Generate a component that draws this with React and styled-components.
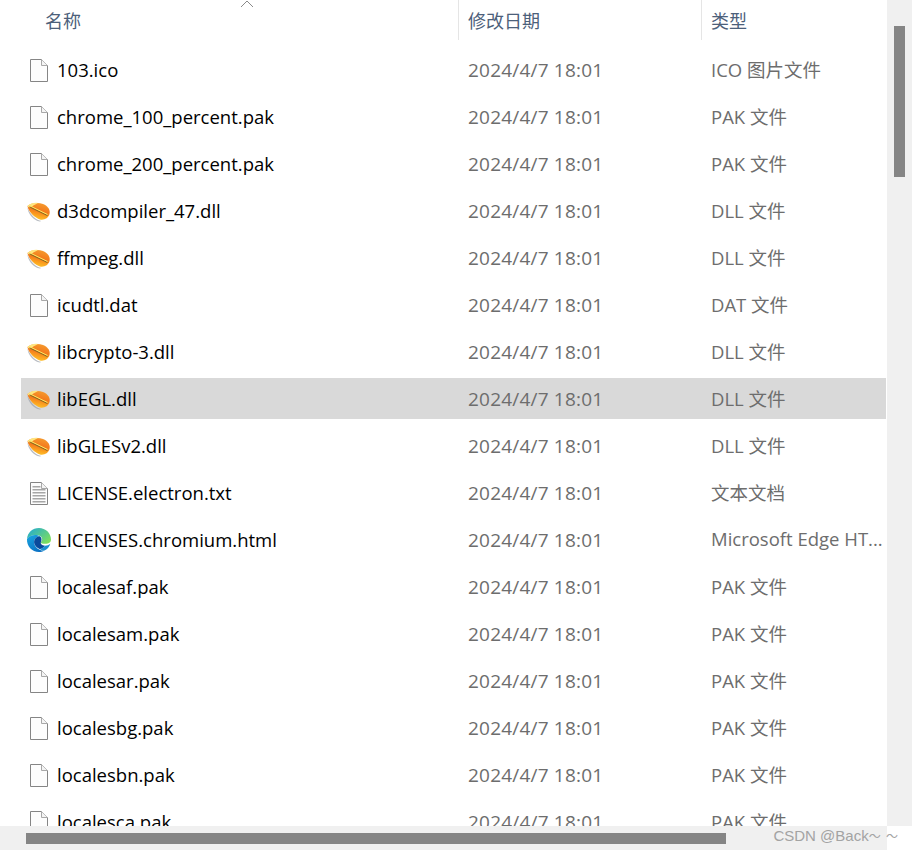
import React from 'react';
import styled, {createGlobalStyle} from 'styled-components';

const files = [
    {name: '103.ico', type: 'ICO 图片文件', icon: 'file'},
    {name: 'chrome_100_percent.pak', type: 'PAK 文件', icon: 'file'},
    {name: 'chrome_200_percent.pak', type: 'PAK 文件', icon: 'file'},
    {name: 'd3dcompiler_47.dll', type: 'DLL 文件', icon: 'dll'},
    {name: 'ffmpeg.dll', type: 'DLL 文件', icon: 'dll'},
    {name: 'icudtl.dat', type: 'DAT 文件', icon: 'file'},
    {name: 'libcrypto-3.dll', type: 'DLL 文件', icon: 'dll'},
    {name: 'libEGL.dll', type: 'DLL 文件', icon: 'dll', selected: true},
    {name: 'libGLESv2.dll', type: 'DLL 文件', icon: 'dll'},
    {name: 'LICENSE.electron.txt', type: '文本文档', icon: 'text'},
    {name: 'LICENSES.chromium.html', type: 'Microsoft Edge HT...', icon: 'edge'},
    {name: 'localesaf.pak', type: 'PAK 文件', icon: 'file'},
    {name: 'localesam.pak', type: 'PAK 文件', icon: 'file'},
    {name: 'localesar.pak', type: 'PAK 文件', icon: 'file'},
    {name: 'localesbg.pak', type: 'PAK 文件', icon: 'file'},
    {name: 'localesbn.pak', type: 'PAK 文件', icon: 'file'},
    {name: 'localesca.pak', type: 'PAK 文件', icon: 'file'},
]

const FileIcon = ({lines}) => (
    <svg width="24" height="26" viewBox="0 0 24 26">
        <path d="M4.5 2.5H15.5L21.5 8.5V24.5H4.5Z" fill="#fdfdfd" stroke="#858585"/>
        <path d="M15.5 2.5V8.5H21.5" fill="#f4f4f4" stroke="#a8a8a8"/>
        {lines && [6, 9, 12, 15, 18, 21].map(y => (
            <rect key={y} x="6.500" y={y} width={y === 6 ? 8 : 13} height="1.500" fill="#a6a6a6"/>
        ))}
    </svg>
)

const DllIcon = () => (
    <svg width="26" height="26" viewBox="0 0 26 26">
        <defs>
            <linearGradient id="leaf" x1="0.6" y1="0" x2="0.3" y2="1">
                <stop offset="0" stopColor="#f59a2e"/>
                <stop offset="0.45" stopColor="#f47a1c"/>
                <stop offset="0.7" stopColor="#fba01f"/>
                <stop offset="1" stopColor="#ffc92e"/>
            </linearGradient>
        </defs>
        <path d="M1.500 9C2.500 14 8.500 21 13.500 22.500C16.500 23 14.500 24 11.500 23C6.500 21 1.500 15 1.500 9Z" fill="#9aa0a8" opacity="0.7"/>
        <path d="M1.500 8C4.500 5 12 4 17 6C22 8 24.500 12 23.500 16C22.500 20 18 22.500 14 21.500C9 20 2.500 14 1.500 8Z" fill="url(#leaf)"/>
        <path d="M1.500 8C4.500 5 9 4.500 12 5C9 6.500 6 8 5 10C3.500 9.500 2 9 1.500 8Z" fill="#ffe680"/>
        <path d="M3.500 8.800L21.500 17.500" stroke="#8a6a20" strokeWidth="1.200"/>
        <path d="M4 7.900L21.500 16.500" stroke="#ffe765" strokeWidth="1"/>
    </svg>
)

const EdgeIcon = () => (
    <svg width="26" height="26" viewBox="0 0 26 26">
        <defs>
            <linearGradient id="edgeBlue" x1="0" y1="0" x2="0.6" y2="1">
                <stop offset="0" stopColor="#1aa5e0"/>
                <stop offset="1" stopColor="#0b72c4"/>
            </linearGradient>
            <linearGradient id="edgeGreen" x1="0" y1="0" x2="1" y2="0.8">
                <stop offset="0" stopColor="#1fa8d8"/>
                <stop offset="1" stopColor="#7fe05a"/>
            </linearGradient>
        </defs>
        <path d="M1 12C1.500 5.500 6.500 1 13 1C19.500 1 25 6 25 12.500C25 15.500 22.500 16.800 19.500 16.800C16.500 16.800 14.500 16.200 14.800 15.200C16.500 14 16.800 11 14.500 9.300C11 7 4.500 7.500 1 12Z" fill="url(#edgeGreen)"/>
        <path d="M1 12C4 7.500 11 7.300 13.800 9.300C9.500 9.800 7.500 13 8.300 16.500C9 20.500 13.500 24 18.500 23.500C16.500 24.600 14.800 25 13 25C6 25 .5 19 1 12Z" fill="url(#edgeBlue)"/>
        <path d="M13.800 9.300C15.500 10.500 16 12.500 15.200 14.500C14 16.500 15.500 18.500 19 18.800C17.500 21 15 22.500 13.500 22C10.500 20.500 8.800 18.500 8.300 16.500C7.500 13 9.500 9.800 13.800 9.300Z" fill="#0a4a9c"/>
        <path d="M19 18.800C21 18.700 23 18 24.300 16.800C23.500 20 21 22.500 18.500 23.500C16.500 23.700 15 23 13.500 22C15.500 22 17.500 20.800 19 18.800Z" fill="#1b8fd0"/>
    </svg>
)

const icons = {
    file: <FileIcon/>,
    text: <FileIcon lines/>,
    dll: <DllIcon/>,
    edge: <EdgeIcon/>,
}

const App = () => {
    return (
        <Window>
            <GlobalStyle/>
            <Content>
                <Header>
                    <HeaderCell>
                        名称
                        <SortCaret width="14" height="8" viewBox="0 0 14 8">
                            <path d="M1 7L7 1L13 7" fill="none" stroke="#8a8a8a" strokeWidth="1"/>
                        </SortCaret>
                    </HeaderCell>
                    <HeaderCell>修改日期</HeaderCell>
                    <HeaderCell>类型</HeaderCell>
                </Header>
                <List>
                    {files.map(file => (
                        <Row key={file.name} $selected={file.selected}>
                            <NameCell>
                                <IconSlot>{icons[file.icon]}</IconSlot>
                                {file.name}
                            </NameCell>
                            <DateCell>2024/4/7 18:01</DateCell>
                            <TypeCell>{file.type}</TypeCell>
                        </Row>
                    ))}
                </List>
            </Content>
            <VerticalTrack><VerticalThumb/></VerticalTrack>
            <HorizontalTrack><HorizontalThumb/></HorizontalTrack>
            <Corner/>
            <Watermark>CSDN @Back<Tilde>～ ～</Tilde></Watermark>
        </Window>
    );
};

const GlobalStyle = createGlobalStyle`
  html, body {
    margin: 0;
    padding: 0;
    background: #fff;
  }
`

const Window = styled.div`
  position: relative;
  width: 912px;
  height: 850px;
  overflow: hidden;
  display: grid;
  grid-template-columns: 887px 25px;
  grid-template-rows: 826px 24px;
  font-family: "Open Sans", "Noto Sans CJK SC", sans-serif;
  font-size: 18.5px;
`

const Content = styled.div`
  overflow: hidden;
  min-width: 0;
`

const Header = styled.div`
  display: grid;
  grid-template-columns: 437px 243px 185px;
  height: 40px;
  margin-left: 21px;
  margin-bottom: 9px;
`

const HeaderCell = styled.div`
  position: relative;
  display: flex;
  align-items: center;
  padding: 0 9px 1px;
  color: #4c607a;
  font-size: 18px;
  &:first-child {
    padding-left: 24px;
  }
  &:not(:first-child) {
    border-left: 1px solid #e5e5e5;
  }
`

const SortCaret = styled.svg`
  position: absolute;
  left: 219px;
  top: 0;
`

const List = styled.div`
  display: flex;
  flex-direction: column;
  gap: 6px;
  margin-left: 21px;
  width: 865px;
`

const Row = styled.div`
  flex: none;
  display: grid;
  grid-template-columns: 437px 243px 185px;
  align-items: center;
  height: 41px;
  background: ${props => props.$selected ? '#d9d9d9' : 'transparent'};
`

const NameCell = styled.div`
  display: flex;
  align-items: center;
  color: #000;
  white-space: nowrap;
  padding-left: 5px;
`

const IconSlot = styled.span`
  display: flex;
  width: 31px;
`

const DateCell = styled.div`
  color: #6d6d6d;
  padding-left: 10px;
  font-size: 19px;
  letter-spacing: 0.2px;
  white-space: nowrap;
`

const TypeCell = styled.div`
  color: #6d6d6d;
  padding: 0 0 2px 10px;
  white-space: nowrap;
`

const VerticalTrack = styled.div`
  background: #f0f0f0;
  padding: 26px 7px 0;
`

const VerticalThumb = styled.div`
  width: 11px;
  height: 151px;
  background: #858585;
`

const HorizontalTrack = styled.div`
  background: #f0f0f0;
  padding: 7px 0 0 26px;
`

const HorizontalThumb = styled.div`
  width: 700px;
  height: 11px;
  background: #858585;
`

const Corner = styled.div`
  background: #fff;
`

const Watermark = styled.div`
  position: absolute;
  right: 14px;
  bottom: 6px;
  color: #a3a3a3;
  font-family: "Liberation Sans", "Noto Sans CJK SC", sans-serif;
  font-size: 15px;
  white-space: nowrap;
`

const Tilde = styled.span`
  font-size: 12px;
  word-spacing: 2px;
`

export default App;
